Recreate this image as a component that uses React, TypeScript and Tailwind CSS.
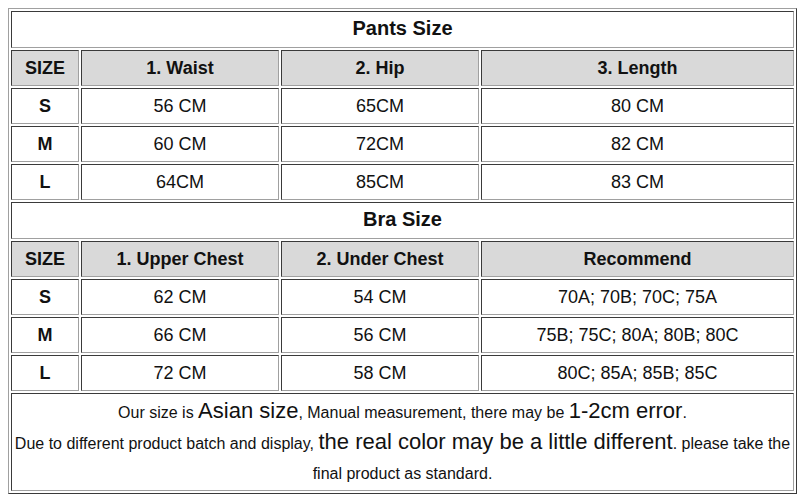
import React from "react";

const cell =
  "flex items-center justify-center border border-t-[#3a3a3a] border-l-[#3a3a3a] border-r-[#a0a0a0] border-b-[#a0a0a0] text-[18px] text-[#111]";
const head = cell + " bg-[#d9d9d9] font-bold h-[36px]";
const data = cell + " bg-white h-[36px]";
const title = cell + " col-span-4 bg-white font-bold text-[20px] h-[37px] pb-[3px]";

function Section({
  name,
  headers,
  rows,
}: {
  name: string;
  headers: string[];
  rows: string[][];
}) {
  return (
    <>
      <div className={title}>{name}</div>
      {headers.map((h) => (
        <div key={h} className={head}>
          {h}
        </div>
      ))}
      {rows.map((r) =>
        r.map((c, i) => (
          <div key={r[0] + i} className={data + (i === 0 ? " font-bold" : "")}>
            {c}
          </div>
        ))
      )}
    </>
  );
}

export default function App() {
  return (
    <div
      className="w-[805px] h-[501px] bg-white pt-[8px] pl-[8px]"
      style={{ fontFamily: '"Liberation Sans", Arial, sans-serif' }}
    >
      <div className="w-[789px] grid grid-cols-[68px_198px_198px_313px] gap-[2px] p-[2px] border border-t-[#a0a0a0] border-l-[#a0a0a0] border-r-[#3a3a3a] border-b-[#3a3a3a] bg-white">
        <Section
          name="Pants Size"
          headers={["SIZE", "1. Waist", "2. Hip", "3. Length"]}
          rows={[
            ["S", "56 CM", "65CM", "80 CM"],
            ["M", "60 CM", "72CM", "82 CM"],
            ["L", "64CM", "85CM", "83 CM"],
          ]}
        />
        <Section
          name="Bra Size"
          headers={["SIZE", "1. Upper Chest", "2. Under Chest", "Recommend"]}
          rows={[
            ["S", "62 CM", "54 CM", "70A; 70B; 70C; 75A"],
            ["M", "66 CM", "56 CM", "75B; 75C; 80A; 80B; 80C"],
            ["L", "72 CM", "58 CM", "80C; 85A; 85B; 85C"],
          ]}
        />
        <div className="col-span-4 h-[98px] border border-t-[#3a3a3a] border-l-[#3a3a3a] border-r-[#a0a0a0] border-b-[#a0a0a0] bg-white text-center text-[16px] text-[#111] pt-[1px]">
          <div className="h-[31px] leading-[31px] whitespace-nowrap">
            Our size is <span className="text-[22px]">Asian size</span>, Manual
            measurement, there may be <span className="text-[22px]">1-2cm error</span>.
          </div>
          <div className="h-[32px] leading-[32px] whitespace-nowrap">
            Due to different product batch and display,{" "}
            <span className="text-[22px]">the real color may be a little different</span>.
            please take the
          </div>
          <div className="h-[32px] leading-[32px] whitespace-nowrap">
            final product as standard.
          </div>
        </div>
      </div>
    </div>
  );
}
